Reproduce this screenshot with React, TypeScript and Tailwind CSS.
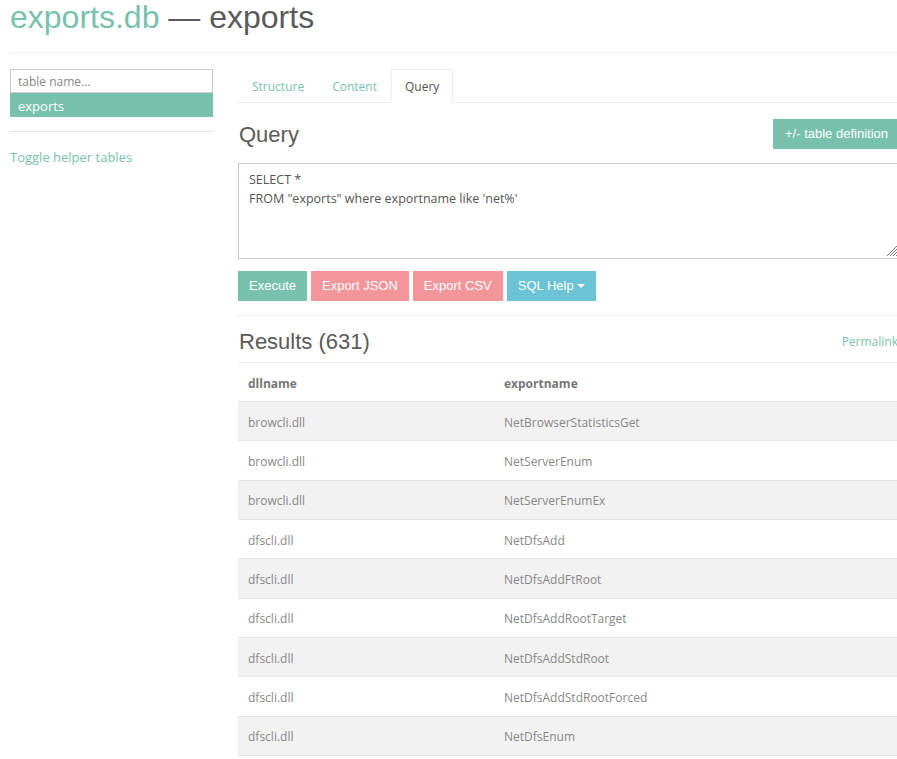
import React from 'react';

const rows: [string, string][] = [
  ['browcli.dll', 'NetBrowserStatisticsGet'],
  ['browcli.dll', 'NetServerEnum'],
  ['browcli.dll', 'NetServerEnumEx'],
  ['dfscli.dll', 'NetDfsAdd'],
  ['dfscli.dll', 'NetDfsAddFtRoot'],
  ['dfscli.dll', 'NetDfsAddRootTarget'],
  ['dfscli.dll', 'NetDfsAddStdRoot'],
  ['dfscli.dll', 'NetDfsAddStdRootForced'],
  ['dfscli.dll', 'NetDfsEnum'],
];

const Button: React.FC<{ label: string; color: string; caret?: boolean }> = ({ label, color, caret }) => (
  <button
    className={`h-[30px] px-[11px] text-[13px] text-white font-['Liberation_Sans',Arial,sans-serif] flex items-center ${color}`}
  >
    {label}
    {caret && (
      <span className="ml-[3px] inline-block w-0 h-0 border-x-[4px] border-x-transparent border-t-[4px] border-t-white" />
    )}
  </button>
);

export default function App() {
  return (
    <div className="w-[897px] h-[759px] overflow-hidden bg-white font-['Open_Sans',sans-serif] text-[#888]">
      <div className="w-[900px] pl-[10px]">
        <h1 className="text-[32px] leading-[34px] font-['Liberation_Sans',Arial,sans-serif] text-[#5a5a5a]">
          <span className="text-[#78c2ad]">exports.db</span> — exports
        </h1>
        <div className="mt-[18px] border-t border-[#f0eeeb]" />

        <div className="flex mt-[16px]">
          {/* sidebar */}
          <div className="w-[203px] shrink-0">
            <div className="h-[24px] border border-[#ccc] flex items-center pl-[7px] pt-[1px] text-[12px] text-[#888]">
              table name...
            </div>
            <div className="h-[24px] bg-[#78c2ad] text-white text-[13px] flex items-center pl-[8px] pt-[3px]">exports</div>
            <div className="mt-[14px] border-t border-[#e3e3e3]" />
            <div className="mt-[16px] text-[13px] text-[#78c2ad]">Toggle helper tables</div>
          </div>

          {/* main */}
          <div className="ml-[25px] w-[662px] shrink-0">
            <div className="flex h-[34px] border-b border-[#eee] text-[12px]">
              <div className="pl-[14px] pr-[13px] mr-[2px] flex items-center pt-[2px] text-[#78c2ad]">Structure</div>
              <div className="px-[13px] mr-[1px] flex items-center pt-[2px] text-[#78c2ad]">Content</div>
              <div className="px-[13px] flex items-center pt-[2px] text-[#555] border border-[#eee] border-b-white bg-white -mb-px">
                Query
              </div>
            </div>

            <div className="mt-[16px] h-[30px] flex items-center justify-between">
              <h2 className="text-[22px] font-['Liberation_Sans',Arial,sans-serif] text-[#5a5a5a] pl-[1px]">Query</h2>
              <button className="h-[30px] px-[12px] bg-[#78c2ad] text-white text-[13px] font-['Liberation_Sans',Arial,sans-serif]">
                +/- table definition
              </button>
            </div>

            <div className="relative mt-[14px] h-[96px] border border-[#ccc] px-[10px] pt-[6px] text-[12.5px] leading-[19px] text-[#555]">
              <div>SELECT *</div>
              <div>FROM "exports" where exportname like 'net%'</div>
              <svg className="absolute right-[1px] bottom-[1px]" width="13" height="13" viewBox="0 0 13 13">
                <path d="M12 2 L2 12 M12 5 L5 12 M12 8 L8 12 M12 11 L11 12" stroke="#777" strokeWidth="1" />
              </svg>
            </div>

            <div className="mt-[12px] flex gap-[4px]">
              <Button label="Execute" color="bg-[#78c2ad]" />
              <Button label="Export JSON" color="bg-[#f3969a]" />
              <Button label="Export CSV" color="bg-[#f3969a]" />
              <Button label="SQL Help" color="bg-[#6cc3d5]" caret />
            </div>

            <div className="mt-[14px] border-t border-[#eee]" />

            <div className="h-[46px] pt-[5px] flex items-center justify-between">
              <h2 className="text-[22px] font-['Liberation_Sans',Arial,sans-serif] text-[#5a5a5a] pl-[1px]">
                Results (631)
              </h2>
              <span className="text-[12px] text-[#78c2ad] mr-[2px]">Permalink</span>
            </div>

            <table className="w-full border-t border-[#eee] text-[12px] border-collapse">
              <thead>
                <tr className="h-[39px]">
                  <th className="text-left font-bold text-[#777] pl-[10px] pt-[3px] w-[256px]">dllname</th>
                  <th className="text-left font-bold text-[#777] pl-[10px] pt-[3px]">exportname</th>
                </tr>
              </thead>
              <tbody>
                {rows.map((r, i) => (
                  <tr key={i} className={`h-[39.33px] border-t border-[#e6e6e6] ${i % 2 === 0 ? 'bg-[#f2f2f2]' : 'bg-white'}`}>
                    <td className="pl-[10px] pt-[3px]">{r[0]}</td>
                    <td className="pl-[10px] pt-[3px]">{r[1]}</td>
                  </tr>
                ))}
                <tr className="border-t border-[#e6e6e6]">
                  <td colSpan={2} />
                </tr>
              </tbody>
            </table>
          </div>
        </div>
      </div>
    </div>
  );
}
